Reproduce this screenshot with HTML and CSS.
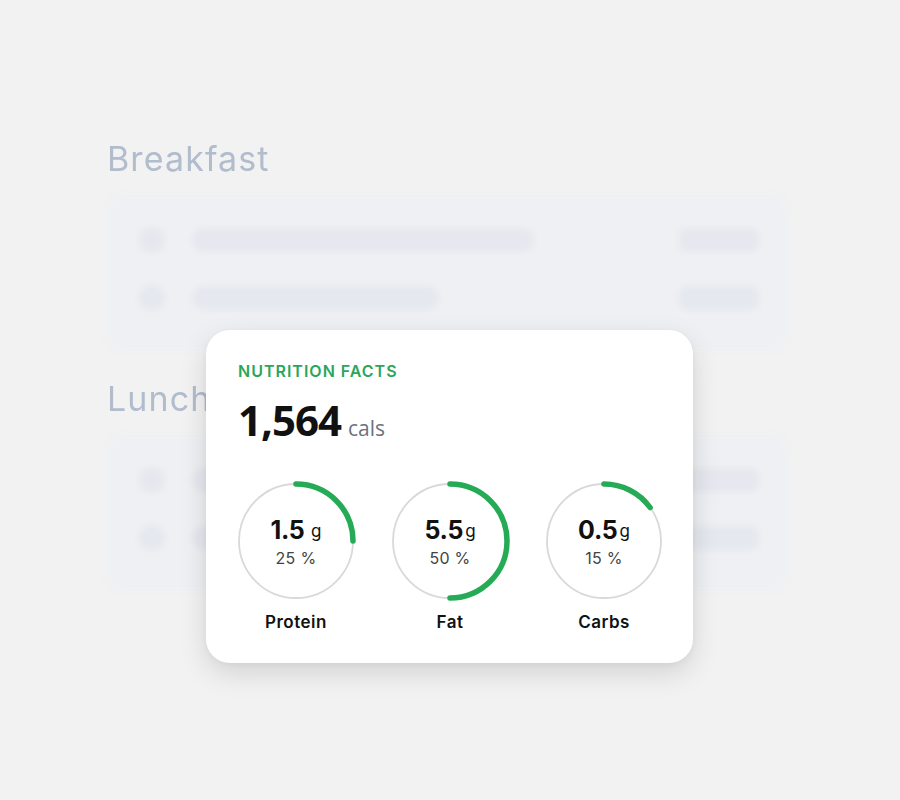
FILE: index.html
```html
<!DOCTYPE html>
<html lang="en">
<head>
<meta charset="utf-8">
<title>Nutrition facts</title>
<link rel="stylesheet" href="styles.css">
</head>
<body>
<main class="stage">
  <div class="meals">
    <section class="meal">
      <h2 class="meal-title">Breakfast</h2>
      <div class="meal-card">
        <div class="meal-row">
          <span class="dot"></span>
          <span class="bar" style="width: 342px"></span>
          <span class="amount"></span>
        </div>
        <div class="meal-row">
          <span class="dot"></span>
          <span class="bar" style="width: 247px"></span>
          <span class="amount"></span>
        </div>
      </div>
    </section>
    <section class="meal">
      <h2 class="meal-title">Lunch</h2>
      <div class="meal-card">
        <div class="meal-row">
          <span class="dot"></span>
          <span class="bar" style="width: 300px"></span>
          <span class="amount"></span>
        </div>
        <div class="meal-row">
          <span class="dot"></span>
          <span class="bar" style="width: 280px"></span>
          <span class="amount"></span>
        </div>
      </div>
    </section>
  </div>

  <article class="facts">
    <h3 class="facts-title">NUTRITION FACTS</h3>
    <p class="calories"><span class="cal-value">1,564</span> <span class="cal-unit">cals</span></p>
    <div class="macros">
      <div class="macro">
        <div class="ring">
          <svg viewBox="0 0 120 120" width="120" height="120">
            <circle class="ring-track" cx="60" cy="60" r="57"/>
            <circle class="ring-fill" cx="60" cy="60" r="57" pathLength="100" stroke-dasharray="25 100" transform="rotate(-90 60 60)"/>
          </svg>
          <div class="ring-text">
            <div class="grams"><b>1.5</b> <span>g</span></div>
            <div class="pct">25 %</div>
          </div>
        </div>
        <div class="macro-name">Protein</div>
      </div>
      <div class="macro">
        <div class="ring">
          <svg viewBox="0 0 120 120" width="120" height="120">
            <circle class="ring-track" cx="60" cy="60" r="57"/>
            <circle class="ring-fill" cx="60" cy="60" r="57" pathLength="100" stroke-dasharray="50 100" transform="rotate(-90 60 60)"/>
          </svg>
          <div class="ring-text">
            <div class="grams"><b>5.5</b><span>g</span></div>
            <div class="pct">50 %</div>
          </div>
        </div>
        <div class="macro-name">Fat</div>
      </div>
      <div class="macro">
        <div class="ring">
          <svg viewBox="0 0 120 120" width="120" height="120">
            <circle class="ring-track" cx="60" cy="60" r="57"/>
            <circle class="ring-fill" cx="60" cy="60" r="57" pathLength="100" stroke-dasharray="15 100" transform="rotate(-90 60 60)"/>
          </svg>
          <div class="ring-text">
            <div class="grams"><b>0.5</b><span>g</span></div>
            <div class="pct">15 %</div>
          </div>
        </div>
        <div class="macro-name">Carbs</div>
      </div>
    </div>
  </article>
</main>
</body>
</html>
```

FILE: styles.css
```css
* {
  box-sizing: border-box;
}

html, body {
  margin: 0;
  padding: 0;
}

body {
  width: 900px;
  height: 800px;
  background: #f2f2f2;
  font-family: Inter, "Noto Sans", sans-serif;
  color: #111;
  overflow: hidden;
}

.stage {
  position: relative;
  width: 900px;
  height: 800px;
}

/* blurred meal list in the background */
.meals {
  padding: 137px 0 0 107px;
  width: 787px;
  display: flex;
  flex-direction: column;
  gap: 26px;
}

.meal-title {
  margin: 0 0 14px 0;
  font-size: 34px;
  font-weight: 400;
  line-height: 44px;
  color: #b1bccd;
  letter-spacing: 1.1px;
  filter: blur(0.6px);
}

.meal-card {
  background: #eef0f3;
  border-radius: 14px;
  padding: 32px 28px 40px 32px;
  display: flex;
  flex-direction: column;
  gap: 32px;
  filter: blur(3px);
}

.meal-row {
  display: flex;
  align-items: center;
  height: 26px;
}

.dot {
  width: 26px;
  height: 26px;
  border-radius: 50%;
  background: #e5e8ee;
  flex: none;
}

.bar {
  height: 24px;
  border-radius: 12px;
  background: #e5e8ee;
  margin-left: 27px;
}

.amount {
  margin-left: auto;
  width: 80px;
  height: 24px;
  border-radius: 8px;
  background: #e5e8ee;
}

/* nutrition card floating over the list */
.facts {
  position: absolute;
  left: 206px;
  top: 330px;
  width: 487px;
  height: 333px;
  background: #fff;
  border-radius: 24px;
  box-shadow: 0 10px 28px rgba(0, 0, 0, 0.13), 0 2px 6px rgba(0, 0, 0, 0.04);
  padding: 31px 28px 0 32px;
}

.facts-title {
  margin: 0;
  font-size: 16px;
  line-height: 20px;
  font-weight: 600;
  color: #2aa65c;
  letter-spacing: 1px;
}

.calories {
  margin: 15px 0 0 0;
  line-height: 48px;
  display: flex;
  align-items: baseline;
  gap: 7px;
}

.cal-value {
  font-family: "Open Sans", "Noto Sans", sans-serif;
  font-size: 42px;
  font-weight: 700;
  color: #111;
  letter-spacing: -1px;
}

.cal-unit {
  font-family: "Open Sans", "Noto Sans", sans-serif;
  font-size: 21px;
  color: #6b7280;
}

.macros {
  margin-top: 29px;
  margin-left: -2px;
  display: grid;
  grid-template-columns: repeat(3, 120px);
  column-gap: 34px;
}

.macro {
  display: flex;
  flex-direction: column;
  align-items: center;
}

.ring {
  position: relative;
  width: 120px;
  height: 120px;
}

.ring svg {
  display: block;
}

.ring-track {
  fill: none;
  stroke: #d9d9d9;
  stroke-width: 1.8;
}

.ring-fill {
  fill: none;
  stroke: #25ab56;
  stroke-width: 5.5;
  stroke-linecap: round;
}

.ring-text {
  position: absolute;
  inset: 0;
  display: flex;
  flex-direction: column;
  align-items: center;
  justify-content: center;
  padding-top: 2px;
}

.grams {
  line-height: 28px;
  white-space: nowrap;
}

.grams b {
  font-size: 25px;
  font-weight: 700;
  letter-spacing: -0.3px;
}

.grams span {
  font-size: 17px;
  font-weight: 400;
  margin-left: 2px;
  position: relative;
  top: -2px;
}

.pct {
  font-size: 16px;
  color: #444;
  line-height: 20px;
  margin-top: 1px;
  letter-spacing: 0.3px;
}

.macro-name {
  margin-top: 10px;
  font-size: 17px;
  font-weight: 600;
  line-height: 22px;
  color: #111;
  letter-spacing: 0.5px;
}
```
